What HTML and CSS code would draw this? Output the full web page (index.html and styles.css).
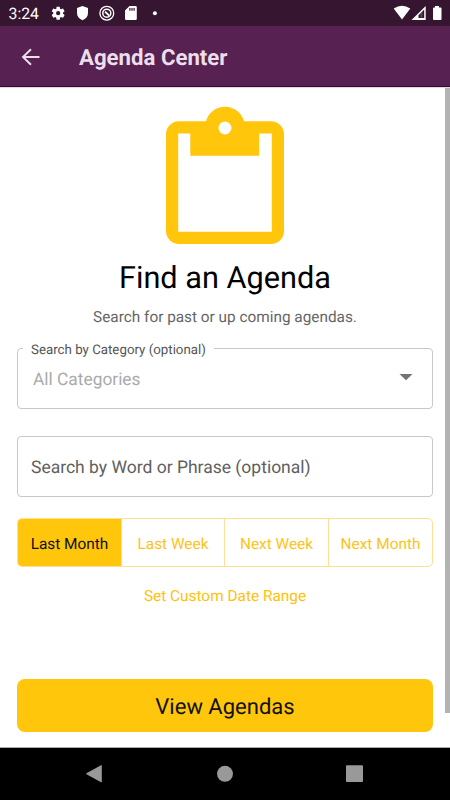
FILE: index.html
```html
<!DOCTYPE html>
<html lang="en">
<head>
<meta charset="utf-8">
<title>Agenda Center</title>
<link rel="stylesheet" href="styles.css">
</head>
<body>
<div class="status">
  <span class="clock">3:24</span>
  <svg class="notifications" width="110" height="26" viewBox="50 0 110 26" fill="#fff">
    <g transform="translate(50 5) scale(.68)"><path d="M19.14 12.94c.04-.3.06-.61.06-.94s-.02-.64-.07-.94l2.03-1.58a.49.49 0 0 0 .12-.61l-1.92-3.32a.49.49 0 0 0-.59-.22l-2.39.96a7 7 0 0 0-1.62-.94l-.36-2.54A.48.48 0 0 0 13.920 2.400h-3.840a.47.47 0 0 0-.47.410l-.36 2.540c-.59.240-1.130.570-1.620.940l-2.390-.960a.48.48 0 0 0-.590.220L2.740 8.870a.48.48 0 0 0 .120.610l2.030 1.580a6 6 0 0 0 0 1.880l-2.030 1.580a.49.49 0 0 0-.120.610l1.920 3.320c.120.220.370.290.590.220l2.390-.960c.500.380 1.030.700 1.620.940l.360 2.540c.050.240.240.410.480.410h3.840c.240 0 .440-.170.470-.410l.360-2.540a7 7 0 0 0 1.620-.940l2.390.960c.220.080.470 0 .590-.220l1.920-3.320a.47.47 0 0 0-.120-.610zM12 15.100a3.100 3.100 0 1 1 0-6.200 3.100 3.100 0 0 1 0 6.200z"/></g>
    <path d="M82.500 6 88 8v5c0 3.500-2.300 6-5.500 7.200C79.300 19 77 16.500 77 13V8z"/>
    <circle cx="106.800" cy="13.200" r="6.900" fill="none" stroke="#fff" stroke-width="1.300"/>
    <circle cx="106.800" cy="13.200" r="4" fill="none" stroke="#fff" stroke-width="1.500"/>
    <path d="m105 11.800 4.400 3.800" stroke="#fff" stroke-width="1.800"/>
    <path fill-rule="evenodd" d="M129.500 6h6q1.300 0 1.300 1.300v11.400q0 1.300-1.300 1.300h-9.200q-1.300 0-1.300-1.300V10.500zM129.300 8v2.700h1.200V8zm2.100 0v2.700h1.200V8zm2.100 0v2.700h1.200V8z"/>
    <circle cx="154.900" cy="13.300" r="2"/>
  </svg>
  <svg class="signals" width="60" height="26" viewBox="390 0 60 26" fill="#fff">
    <path d="M393.700 8.500q8.300-5.500 16.600 0L402 19.500z"/>
    <path fill-rule="evenodd" d="M411.500 20 425.700 6v14zM418.500 18h5.700v-8.500l-5.700 5.700z"/>
    <path d="M420.300 17.500v-4l2.200-2.200v6.200z" opacity=".2"/>
    <path d="M435 6h4v1.500h1.500q1 0 1 1V19q0 1-1 1h-6.500q-1 0-1-1V8.500q0-1 1-1h1z"/>
  </svg>
</div>
<header class="appbar">
  <svg class="back" width="20" height="18" viewBox="0 0 20 18"><path d="M18.500 9H2M10 1.200 2 9l8 7.800" fill="none" stroke="#eadfea" stroke-width="1.900"/></svg>
  <h1>Agenda Center</h1>
</header>
<main>
  <div class="scrollbar"></div>
  <svg class="clipboard" width="120" height="140" viewBox="165 106 120 140"><path fill="#ffc60b" fill-rule="evenodd" d="M179 121.300h27a19.700 19.700 0 0 1 38 0h27a13 13 0 0 1 13 13V231a13 13 0 0 1-13 13h-92a13 13 0 0 1-13-13v-96.700a13 13 0 0 1 13-13zM178.200 133.500v98.200h93.600v-98.200h-12.600v22.300h-68.900v-22.300zM225 121.500a6.500 6.500 0 1 0 0 13 6.500 6.500 0 0 0 0-13z"/></svg>
  <h2>Find an Agenda</h2>
  <p class="subtitle">Search for past or up coming agendas.</p>
  <div class="field category">
    <span class="label">Search by Category (optional)</span>
    <span class="placeholder">All Categories</span>
    <svg width="14" height="8" viewBox="0 0 14 8"><path d="M.5 1h13L7 7.300z" fill="#737373"/></svg>
  </div>
  <div class="field phrase"><span>Search by Word or Phrase (optional)</span></div>
  <div class="segments">
    <div class="segment active"><span>Last Month</span></div>
    <div class="segment"><span>Last Week</span></div>
    <div class="segment"><span>Next Week</span></div>
    <div class="segment"><span>Next Month</span></div>
  </div>
  <a class="custom">Set Custom Date Range</a>
  <div class="submit"><span>View Agendas</span></div>
</main>
<nav>
  <svg width="450" height="52" viewBox="0 748 450 52" fill="#999"><path d="M86.500 773.200 101 765.200q.8-.4.800.500v16q0 .9-.8.500l-14.500-8q-.8-.5 0-1z"/><circle cx="225" cy="773.800" r="8"/><rect x="346" y="765.300" width="17" height="16.700" rx="1"/></svg>
</nav>
</body>
</html>
```
FILE: styles.css
```css
* { box-sizing: border-box; }
body { margin: 0; width: 450px; height: 800px; overflow: hidden; display: flex; flex-direction: column; font-family: Roboto, sans-serif; text-rendering: geometricPrecision; background: #fff; }
h1, h2, p { margin: 0; font-weight: 400; }
svg { display: block; flex: none; }
span, h1, h2, p, a { white-space: nowrap; }
.status { height: 26px; flex: none; display: flex; align-items: center; background: #35152f; color: #fff; }
.clock { width: 50px; padding-left: 8.500px; font-size: 15.800px; line-height: 26px; padding-top: 2px; }
.signals { margin-left: auto; }
.appbar { height: 61px; flex: none; display: flex; align-items: center; background: #572151; border-bottom: 1px solid #43003f; }
.back { margin-left: 21px; margin-top: 1px; }
.appbar h1 { margin-left: 38px; font-size: 22.200px; font-weight: 700; color: #eadfea; line-height: 30px; padding-top: 4px; }
main { position: relative; height: 661px; flex: none; padding: 18px 17px 0; display: flex; flex-direction: column; align-items: center; border-top: 1px solid #ddd; border-bottom: 1px solid #aaa; }
.scrollbar { position: absolute; right: 0; top: 0; width: 5px; height: 625px; background: #b3b3b3; }
h2 { margin-top: 14px; font-size: 30.700px; line-height: 38px; color: #000; }
.subtitle { margin-top: 9px; font-size: 15.350px; line-height: 20px; color: #666; }
.field { width: 416px; height: 61px; flex: none; border: 1px solid #c8c8c8; border-radius: 4px; display: flex; align-items: center; }
.category { position: relative; margin-top: 21px; padding: 0 19px 0 15px; justify-content: space-between; }
.category svg { margin-top: -3px; }
.label { position: absolute; left: 5px; top: -8px; padding: 0 8px; background: #fff; font-size: 13.300px; line-height: 20px; color: #555; }
.placeholder { font-size: 17.350px; padding-top: 3px; color: #aaa; }
.phrase { margin-top: 27px; padding: 2px 0 0 13px; font-size: 17.500px; color: #606060; }
.segments { width: 416px; height: 49px; flex: none; margin-top: 21px; display: grid; grid-template-columns: 103px 103px 104px 104px; border: 1px solid #ffdf96; border-radius: 5px; overflow: hidden; }
.segment { display: flex; align-items: center; justify-content: center; padding-top: 3px; font-size: 15.400px; color: #ffc21b; }
.segment + .segment { border-left: 1px solid #ffdf96; }
.segment.active { background: #ffc60b; color: #111; }
.custom { margin-top: 18px; font-size: 15.400px; line-height: 22px; color: #ffc10c; }
.submit { width: 416px; height: 53px; flex: none; margin-top: 72px; display: flex; align-items: center; justify-content: center; border-radius: 8px; background: #ffc60b; color: #111; font-size: 22px; padding-top: 3px; }
nav { height: 52px; flex: none; background: #000; }
```
